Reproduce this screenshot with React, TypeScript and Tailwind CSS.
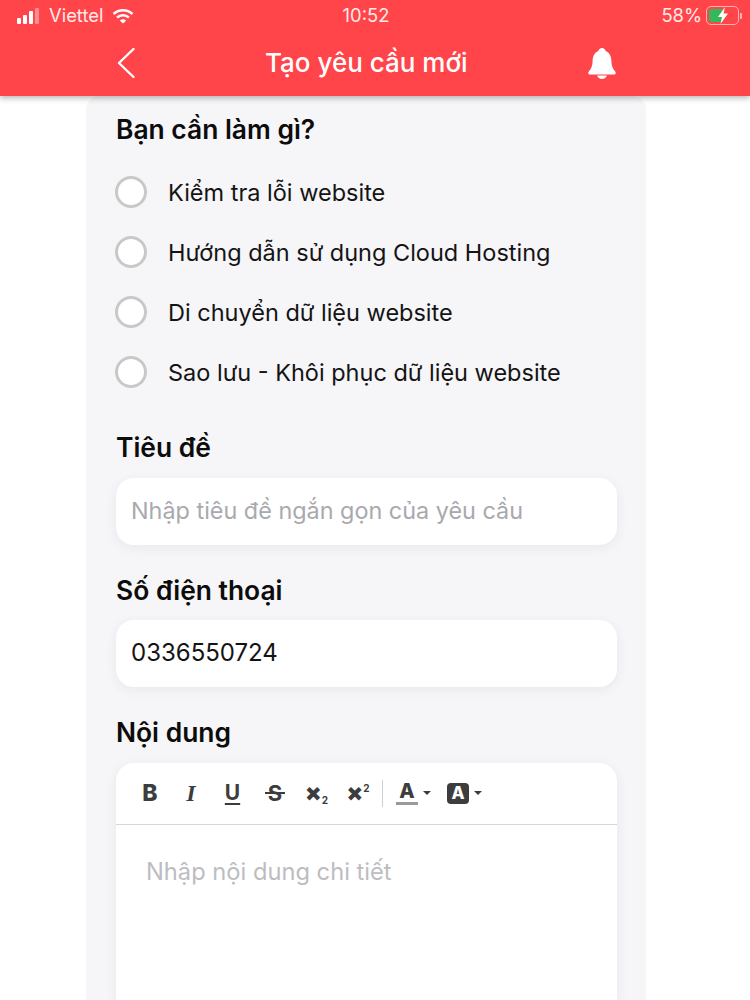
import React from "react";

const font = { fontFamily: '"Inter","Noto Sans",sans-serif' };

function Radio({ label }: { label: string }) {
  return (
    <div className="-ml-[1px] flex h-[60px] items-center">
      <div className="h-[32px] w-[32px] shrink-0 rounded-full border-[3px] border-[#c8c8c8] bg-white" />
      <span className="ml-[21px] pt-[1px] text-[23.5px] leading-[30px] text-[#141414]">{label}</span>
    </div>
  );
}

function Label({ children, className }: { children: React.ReactNode; className: string }) {
  return <div className={"text-[26.4px] font-semibold leading-[34px] text-[#0c0c0c] " + className}>{children}</div>;
}

function Tool({ children, className }: { children: React.ReactNode; className?: string }) {
  return <span className={"flex h-[28px] items-center justify-center text-[#3d3d3d] " + (className ?? "")}>{children}</span>;
}

function Caret() {
  return <span className="ml-[5px] h-0 w-0 border-x-[4px] border-t-[4px] border-x-transparent border-t-[#3d3d3d]" />;
}

export default function App() {
  return (
    <div style={font} className="flex h-[1000px] w-[750px] flex-col overflow-hidden bg-white">
      <header className="relative z-10 h-[96px] shrink-0 bg-[#ff444a] text-white shadow-[0_2px_6px_rgba(0,0,0,0.3)]">
        <div className="flex h-[32px] items-center pl-[17px] pr-[8px] text-[18.4px] text-[#ffe9e9]">
          <div className="flex w-[325px] items-center">
            <div className="flex h-[16px] w-[24px] items-end gap-[2px]">
              <span className="h-[6px] w-[4px] rounded-[1px] bg-white" />
              <span className="h-[9px] w-[4px] rounded-[1px] bg-white" />
              <span className="h-[13px] w-[4px] rounded-[1px] bg-white" />
              <span className="h-[16px] w-[4px] rounded-[1px] bg-white/40" />
            </div>
            <span className="ml-[8px] w-[55px]">Viettel</span>
            <svg className="ml-[8px]" width="22" height="16" viewBox="0 0 22 16" fill="none" stroke="white" strokeWidth="2.4">
              <path d="M1.5 6 C7 1 15 1 20.5 6" />
              <path d="M5 9.5 C8.5 6.4 13.5 6.4 17 9.5" />
              <path d="M11 15.6 L7.8 12.4 C9.6 11 12.4 11 14.2 12.4 Z" fill="white" stroke="none" />
            </svg>
          </div>
          <span className="w-[48px] whitespace-nowrap text-center">10:52</span>
          <div className="ml-auto flex items-center">
            <span>58%</span>
            <div className="relative ml-[4px] h-[19px] w-[33px] rounded-[5px] border border-[#ffb4b4] p-[2px]">
              <div className="h-full w-[14px] rounded-[2px] bg-[#35b859]" />
              <svg className="absolute left-[10px] top-[0px]" width="12" height="17" viewBox="0 0 12 17" fill="white">
                <path d="M8 0 L1 10 H5 L3.5 17 L11 6.5 H6.6 Z" />
              </svg>
            </div>
            <span className="ml-[1px] h-[6px] w-[2px] rounded-r-[1px] bg-[#ffb4b4]" />
          </div>
        </div>
        <div className="flex h-[64px] items-center pb-[3px] pl-[116px]">
          <svg width="20" height="32" viewBox="0 0 20 32" fill="none" stroke="white" strokeWidth="2.4" strokeLinecap="round" strokeLinejoin="round">
            <path d="M17.5 2 L3 16 L17.5 30" />
          </svg>
          <span className="ml-[129px] whitespace-nowrap text-[26px] font-medium leading-[34px]">Tạo yêu cầu mới</span>
          <svg className="ml-[119px]" width="30" height="32" viewBox="0 0 30 32" fill="white">
            <path d="M15 1 C17 1 18.2 2.4 18.6 4 C22.8 5.6 24.2 9.6 24.4 14 C24.6 18.6 25.4 21.5 28.2 24.4 C29.4 25.8 28.6 27.6 27 27.6 H3 C1.4 27.6 0.6 25.8 1.8 24.4 C4.6 21.5 5.4 18.6 5.6 14 C5.8 9.6 7.2 5.6 11.4 4 C11.8 2.4 13 1 15 1 Z" />
            <path d="M10.2 28.6 H19.8 C19.2 30.8 17.4 32 15 32 C12.6 32 10.8 30.8 10.2 28.6 Z" />
          </svg>
        </div>
      </header>

      <main className="ml-[86px] flex w-[560px] flex-1 flex-col rounded-t-[14px] bg-[#f6f5f8] pl-[30px] pr-[29px] pt-[16px]">
        <Label className="mb-[16px]">Bạn cần làm gì?</Label>
        <div className="flex flex-col">
          <Radio label="Kiểm tra lỗi website" />
          <Radio label="Hướng dẫn sử dụng Cloud Hosting" />
          <Radio label="Di chuyển dữ liệu website" />
          <Radio label="Sao lưu - Khôi phục dữ liệu website" />
        </div>
        <Label className="mb-[14px] mt-[28px]">Tiêu đề</Label>
        <div className="flex h-[67px] items-center rounded-[18px] bg-white pb-[1px] pl-[15px] text-[23.4px] text-[#a9a9ae] shadow-[0_3px_12px_rgba(60,60,80,0.07)]">
          Nhập tiêu đề ngắn gọn của yêu cầu
        </div>
        <Label className="mb-[13px] mt-[28px]">Số điện thoại</Label>
        <div className="flex h-[67px] items-center rounded-[18px] bg-white pb-[1px] pl-[15px] text-[24px] text-[#141414] shadow-[0_3px_12px_rgba(60,60,80,0.07)]">
          0336550724
        </div>
        <Label className="mb-[14px] mt-[28px]">Nội dung</Label>
        <div className="flex-1 rounded-t-[18px] bg-white shadow-[0_3px_12px_rgba(60,60,80,0.08)]">
          <div className="flex h-[62px] items-center border-b border-[#d6d6d6] pb-[1px] pl-[26px]">
            <Tool className="w-[16px] text-[23px] font-extrabold">B</Tool>
            <Tool className="ml-[25px] w-[16px] text-[24px] font-bold italic [font-family:'Liberation_Serif',serif]">I</Tool>
            <Tool className="ml-[25px] w-[17px] text-[21px] font-bold underline underline-offset-[3px]">U</Tool>
            <Tool className="relative ml-[24px] w-[20px] text-[22px] font-bold">
              S
              <span className="absolute left-0 right-0 top-[13px] h-[2px] bg-[#3d3d3d]" />
            </Tool>
            <Tool className="ml-[20px] w-[23px] text-[24px] font-black">
              ×<span className="mt-[13px] text-[10px] font-bold leading-none">2</span>
            </Tool>
            <Tool className="ml-[19px] w-[22px] text-[24px] font-black">
              ×<span className="mb-[11px] text-[10px] font-bold leading-none">2</span>
            </Tool>
            <span className="ml-[13px] h-[27px] w-px bg-[#cfcfcf]" />
            <Tool className="ml-[13px]">
              <span className="flex h-[24px] w-[22px] flex-col items-center border-b-[3px] border-[#9a9a9a] text-[20px] font-extrabold leading-[21px]">A</span>
              <Caret />
            </Tool>
            <Tool className="ml-[16px]">
              <span className="flex h-[21px] w-[22px] items-center justify-center rounded-[4px] bg-[#3d3d3d] text-[17px] font-extrabold leading-none text-white">A</span>
              <Caret />
            </Tool>
          </div>
          <div className="pl-[30px] pt-[31px] text-[23.7px] leading-[32px] text-[#bdbdc1]">Nhập nội dung chi tiết</div>
        </div>
      </main>
    </div>
  );
}
